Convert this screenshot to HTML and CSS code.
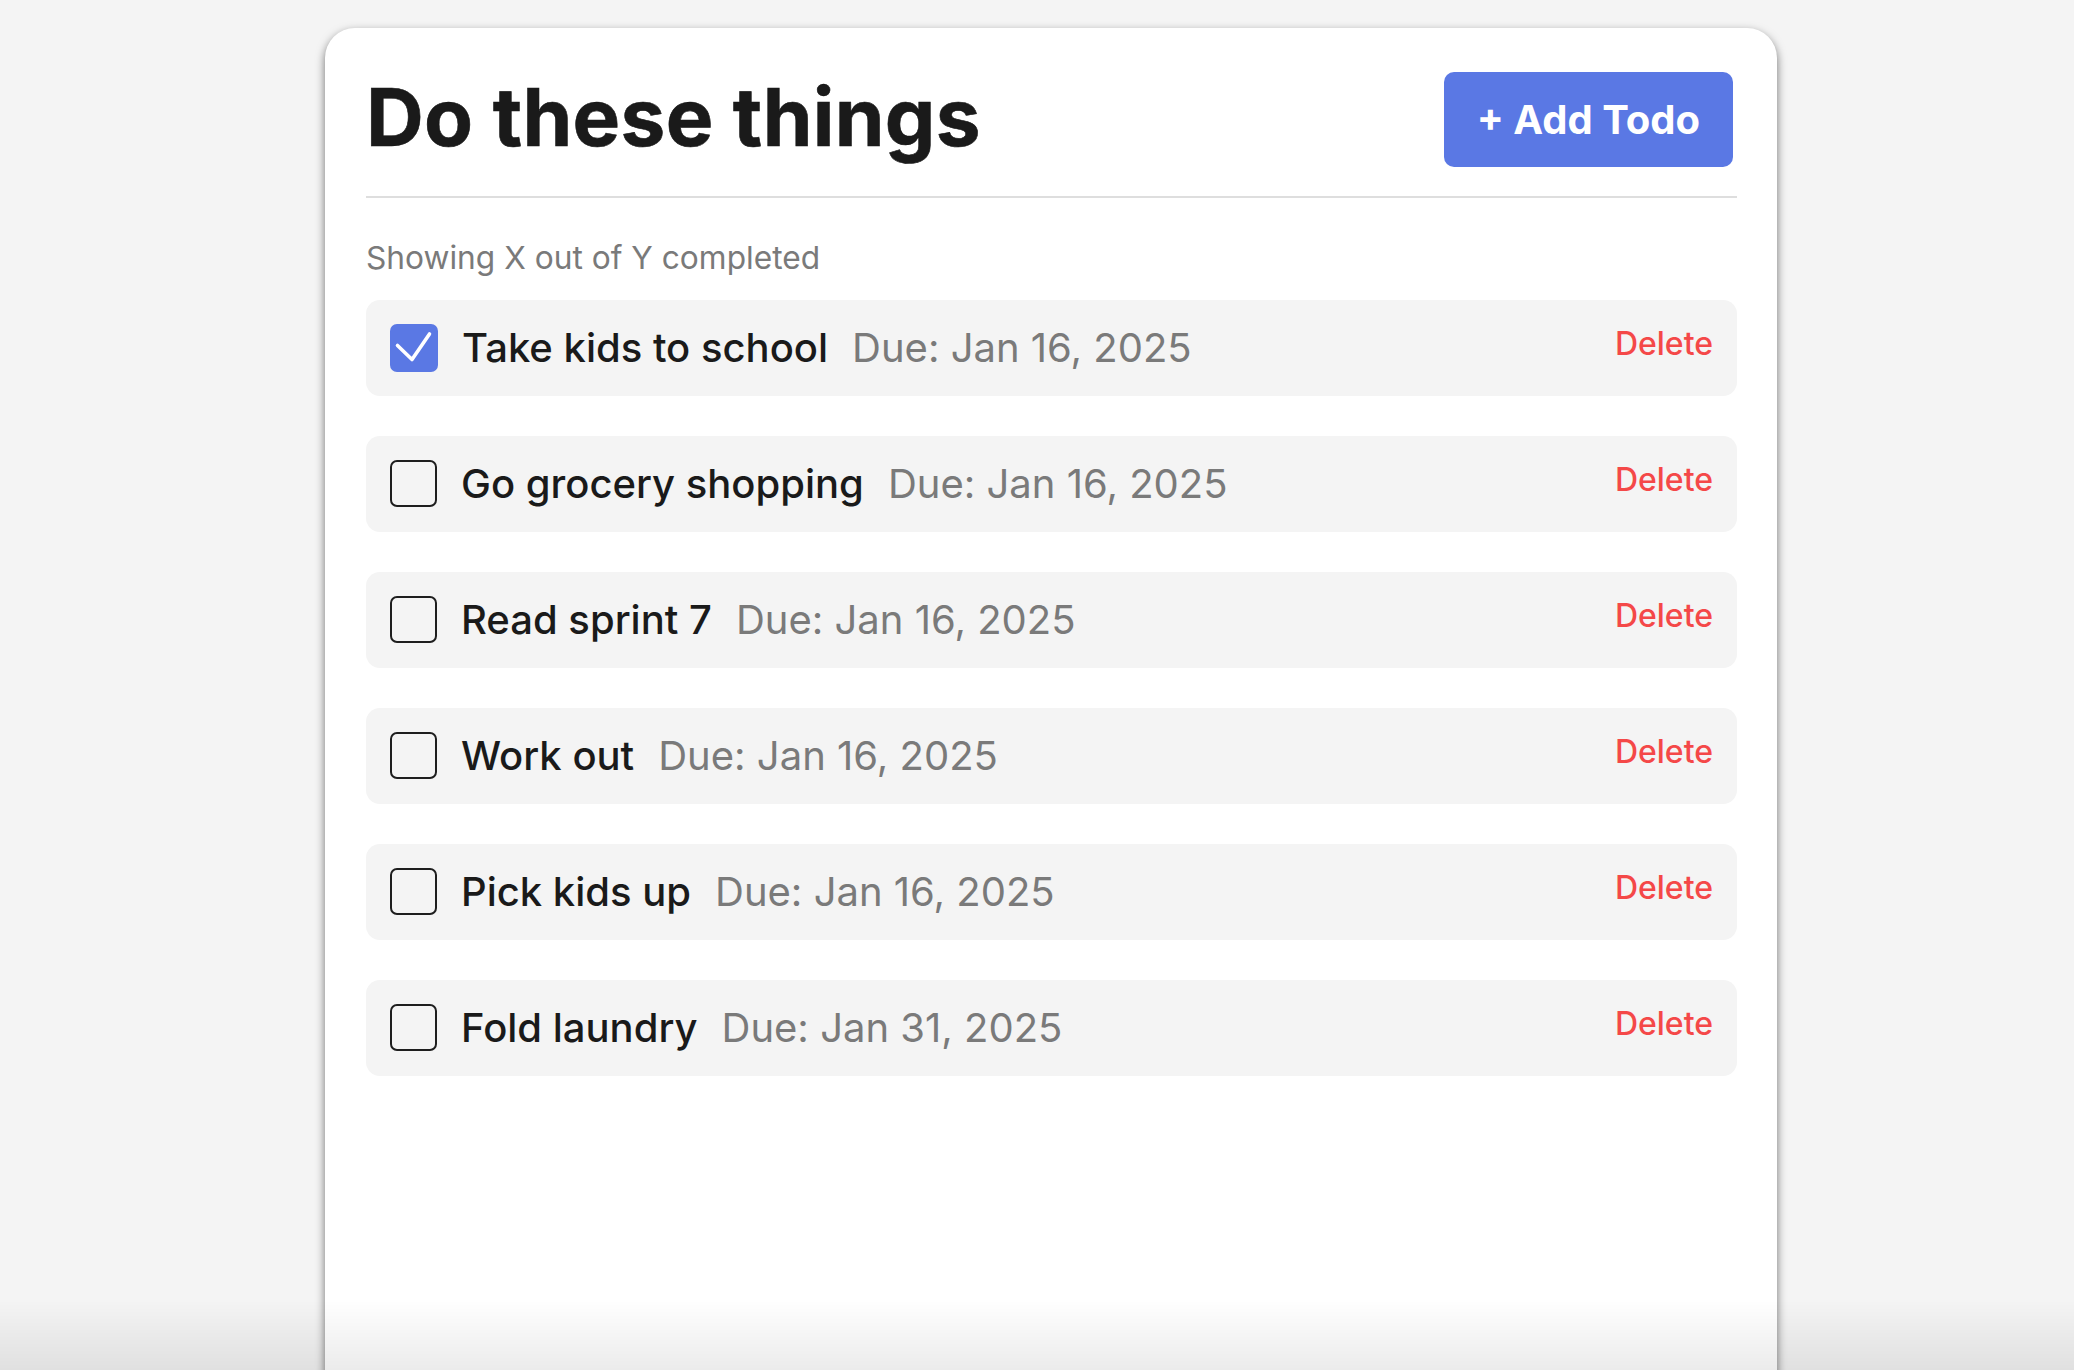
FILE: index.html
```html
<!DOCTYPE html>
<html lang="en">
<head>
<meta charset="utf-8">
<title>Do these things</title>
<link rel="stylesheet" href="styles.css">
</head>
<body>
<div class="page">
  <main class="card">
    <header class="card-header">
      <h1 class="title">Do these things</h1>
      <button class="add-btn">+ Add Todo</button>
    </header>
    <p class="summary">Showing X out of Y completed</p>
    <ul class="todo-list">
      <li class="todo">
        <span class="check checked"><svg viewBox="0 0 48 48" width="48" height="48"><path d="M7.5 21.5 L22 35.5 L39.5 10" fill="none" stroke="#fff" stroke-width="3.6" stroke-linecap="round" stroke-linejoin="round"/></svg></span>
        <span class="todo-name">Take kids to school</span>
        <span class="todo-due">Due: Jan 16, 2025</span>
        <button class="delete">Delete</button>
      </li>
      <li class="todo">
        <span class="check"></span>
        <span class="todo-name">Go grocery shopping</span>
        <span class="todo-due">Due: Jan 16, 2025</span>
        <button class="delete">Delete</button>
      </li>
      <li class="todo">
        <span class="check"></span>
        <span class="todo-name">Read sprint 7</span>
        <span class="todo-due">Due: Jan 16, 2025</span>
        <button class="delete">Delete</button>
      </li>
      <li class="todo">
        <span class="check"></span>
        <span class="todo-name">Work out</span>
        <span class="todo-due">Due: Jan 16, 2025</span>
        <button class="delete">Delete</button>
      </li>
      <li class="todo">
        <span class="check"></span>
        <span class="todo-name">Pick kids up</span>
        <span class="todo-due">Due: Jan 16, 2025</span>
        <button class="delete">Delete</button>
      </li>
      <li class="todo">
        <span class="check"></span>
        <span class="todo-name">Fold laundry</span>
        <span class="todo-due">Due: Jan 31, 2025</span>
        <button class="delete">Delete</button>
      </li>
    </ul>
  </main>
</div>
<div class="bottom-fade"></div>
</body>
</html>
```

FILE: styles.css
```css
* { box-sizing: border-box; }

html, body {
  margin: 0;
  padding: 0;
  background: #f4f4f4;
  font-family: Inter, "Noto Sans", "Liberation Sans", sans-serif;
  overflow: hidden;
  height: 100%;
}

.page {
  padding: 28px 0 0 325px;
}

.card {
  width: 1452px;
  min-height: 1500px;
  background: #fff;
  border-radius: 30px;
  padding: 40px 40px 40px 41px;
  box-shadow: 0 4px 10px rgba(0, 0, 0, 0.55);
}

.card-header {
  display: flex;
  justify-content: space-between;
  align-items: flex-start;
  padding-bottom: 29px;
  border-bottom: 2px solid #dedede;
}

.title {
  margin: 0;
  font-size: 80px;
  font-weight: 700;
  line-height: 97px;
  color: #1a1a1a;
  letter-spacing: 0.3px;
  -webkit-text-stroke: 0.6px #1a1a1a;
}

.add-btn {
  margin: 4px 4px 0 0;
  height: 95px;
  padding: 0 33px 0 33px;
  border: none;
  border-radius: 10px;
  background: #5a78e4;
  color: #fff;
  font-family: inherit;
  font-size: 40px;
  font-weight: 700;
  line-height: 48px;
}

.summary {
  margin: 41px 0 23px;
  font-size: 31.7px;
  line-height: 38px;
  color: #7a7a7a;
}

.todo-list {
  list-style: none;
  margin: 0;
  padding: 0;
  display: flex;
  flex-direction: column;
  gap: 40px;
}

.todo {
  display: flex;
  align-items: flex-start;
  height: 96px;
  padding: 24px;
  background: #f4f4f4;
  border-radius: 14px;
}

.check {
  flex: none;
  width: 47px;
  height: 47px;
  border: 2px solid #1e1e1e;
  border-radius: 7px;
  margin-right: 24px;
  display: flex;
}

.check.checked {
  width: 48px;
  height: 48px;
  border: none;
  background: #5a78e4;
  border-radius: 7px;
}

.todo-name {
  font-size: 40px;
  line-height: 48px;
  font-weight: 500;
  color: #1a1a1a;
  margin-right: 24px;
}

.todo-due {
  font-size: 40px;
  line-height: 48px;
  color: #7a7a7a;
}

.delete {
  margin-left: auto;
  padding: 0;
  border: none;
  background: none;
  font-family: inherit;
  font-size: 32px;
  font-weight: 500;
  line-height: normal;
  color: #f44848;
}

.bottom-fade {
  position: fixed;
  left: 0;
  right: 0;
  bottom: 0;
  height: 70px;
  background: linear-gradient(to bottom, rgba(0, 0, 0, 0), rgba(0, 0, 0, 0.08));
  pointer-events: none;
}
```
